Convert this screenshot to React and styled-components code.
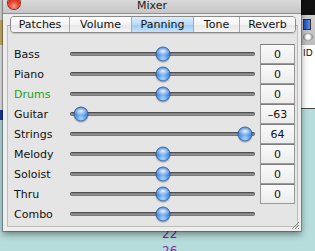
import styled, { createGlobalStyle } from "styled-components";

const GlobalStyle = createGlobalStyle`
  html, body {
    margin: 0;
    padding: 0;
    overflow: hidden;
  }
  body {
    font-family: "DejaVu Sans", "Liberation Sans", sans-serif;
  }
`;

const tabs = ["Patches", "Volume", "Panning", "Tone", "Reverb"];
const tabWidths = [58, 62, 62, 46, 56];

const channels = [
  { name: "Bass", value: 0 },
  { name: "Piano", value: 0 },
  { name: "Drums", value: 0, color: "#1e9e1e" },
  { name: "Guitar", value: -63 },
  { name: "Strings", value: 64 },
  { name: "Melody", value: 0 },
  { name: "Soloist", value: 0 },
  { name: "Thru", value: 0 },
  { name: "Combo", value: 0, noBox: true },
];

const Desktop = styled.div`
  position: relative;
  width: 315px;
  height: 251px;
  overflow: hidden;
  background-color: #b7dcdc;
`;

// other windows peeking out behind the mixer
const RightWindow = styled.div`
  position: absolute;
  left: 299px;
  top: 0;
  width: 20px;
  height: 108px;
  display: flex;
  flex-direction: column;
  border-bottom: 1px solid #4a4a4a;
`;

const RightTop = styled.div`
  height: 15px;
  background-color: #111;
`;

const RightTools = styled.div`
  height: 30px;
  background: linear-gradient(#d0d0d0, #bdbdbd);
  display: flex;
  flex-direction: column;
  align-items: flex-start;
  padding: 4px 0 0 4px;
  box-sizing: border-box;
  gap: 3px;
`;

const BlueBar = styled.div`
  width: 6px;
  height: 9px;
  background: linear-gradient(90deg, #1c4fb8, #5f8ee0);
  border: 1px solid #333;
`;

const Knob = styled.div`
  width: 10px;
  height: 8px;
  border-radius: 50%;
  background: radial-gradient(circle, #fff 30%, #888 70%);
`;

const RightBody = styled.div`
  flex: 1;
  background-color: #fff;
  font-size: 9px;
  padding: 3px 0 0 4px;
  color: #111;
`;

const LeftWindow = styled.div`
  position: absolute;
  left: 0;
  top: 0;
  width: 4px;
  height: 120px;
  display: flex;
  flex-direction: column;
`;

const LeftPart = styled.div`
  height: ${(p) => p.$h}px;
  background-color: ${(p) => p.$bg};
`;

const BackList = styled.div`
  position: absolute;
  left: 162px;
  top: 226px;
  display: flex;
  flex-direction: column;
  font-size: 12px;
  line-height: 17px;
  color: #8d1e9c;
`;

const Window = styled.div`
  position: absolute;
  left: 3px;
  top: -8px;
  width: 298px;
  height: 239px;
  background-color: #ededed;
  box-shadow: 0 0 0 1px rgba(0, 0, 0, 0.25), 0 3px 7px rgba(0, 0, 0, 0.45);
  display: flex;
  flex-direction: column;
  box-sizing: border-box;
`;

const TitleBar = styled.div`
  height: 22px;
  flex-shrink: 0;
  box-sizing: border-box;
  display: grid;
  grid-template-columns: 1fr auto 1fr;
  align-items: center;
  padding-top: 6px;
  background: linear-gradient(#e6e6e6, #d2d2d2 60%, #c6c6c6);
  border-bottom: 1px solid #8e8e8e;
  font-size: 11px;
  color: #1a1a1a;
`;

const CloseButton = styled.div`
  width: 12px;
  height: 12px;
  margin-left: 5px;
  margin-top: -6px;
  border-radius: 50%;
  background: radial-gradient(circle at 50% 75%, #ff9c8c 0, #e8402c 45%, #b01808 100%);
  box-shadow: 0 0 0 1px #8a2a1e;
`;

const Title = styled.div`
  margin-top: -1px;
`;

const Content = styled.div`
  flex: 1;
  display: flex;
  flex-direction: column;
  padding: 2px 3px 4px 4px;
`;

const TabStrip = styled.div`
  position: relative;
  z-index: 1;
  display: flex;
  align-self: center;
  margin-left: 1px;
  height: 17px;
  border: 1px solid #8a8a8a;
  border-radius: 4px;
  overflow: hidden;
  box-sizing: border-box;
  box-shadow: 0 1px 1px rgba(0, 0, 0, 0.15);
`;

const Tab = styled.div`
  display: flex;
  align-items: center;
  justify-content: center;
  box-sizing: border-box;
  font-size: 11px;
  color: #111;
  border-left: 1px solid ${(p) => (p.$first ? "transparent" : "#a8a8a8")};
  background: ${(p) =>
    p.$active
      ? "linear-gradient(#dcedfc, #b9daf8 50%, #9dc9f2 51%, #c6e2fb)"
      : "linear-gradient(#ffffff, #f3f3f3 50%, #e6e6e6 51%, #f4f4f4)"};
  ${(p) => p.$first && "border-left: none;"}
`;

const Panel = styled.div`
  margin-top: -8px;
  flex: 1;
  border: 1px solid #bdbdbd;
  border-top-color: #a8a8a8;
  background-color: #e5e5e5;
  padding: 18px 2px 1px 6px;
  display: flex;
  flex-direction: column;
`;

const Row = styled.div`
  display: grid;
  grid-template-columns: 56px 185px 40px;
  height: 20px;
  align-items: center;
`;

const Label = styled.div`
  font-size: 11px;
  color: ${(p) => p.$color || "#111"};
`;

const Track = styled.div`
  position: relative;
  height: 4px;
  border-radius: 2px;
  background: linear-gradient(#5c5c5c, #8c8c8c 50%, #a8a8a8);
  box-shadow: inset 0 0 0 1px rgba(0, 0, 0, 0.25);
`;

const Thumb = styled.div`
  position: absolute;
  top: 50%;
  width: 15px;
  height: 15px;
  border-radius: 50%;
  transform: translate(-50%, -50%);
  box-sizing: border-box;
  border: 1px solid #2f62a8;
  background:
    radial-gradient(ellipse 60% 35% at 50% 28%, rgba(255, 255, 255, 0.9), rgba(255, 255, 255, 0) 100%),
    radial-gradient(circle at 50% 85%, #a8d6ff 0, #4d93e6 45%, #2166c8 100%);
  box-shadow: 0 1px 1px rgba(0, 0, 0, 0.3);
`;

const ValueBox = styled.div`
  height: 20px;
  margin-left: 5px;
  box-sizing: border-box;
  border: 1px solid #9a9a9a;
  border-top-color: #7e7e7e;
  background: linear-gradient(#fafafa, #ececec);
  display: flex;
  align-items: center;
  justify-content: center;
  font-size: 11px;
  color: #111;
`;

const Grip = styled.svg`
  position: absolute;
  right: 2px;
  bottom: 2px;
`;

function thumbLeft(v) {
  return 10 + ((v + 64) / 128) * 165;
}

function formatValue(v) {
  return v < 0 ? `\u2013${Math.abs(v)}` : `${v}`;
}

export default function App() {
  return (
    <>
      <GlobalStyle />
      <Desktop>
        <LeftWindow>
          <LeftPart $h={20} $bg="#dcdcdc" />
          <LeftPart $h={25} $bg="#c9b36a" />
          <LeftPart $h={65} $bg="#e8e8e8" />
          <LeftPart $h={10} $bg="#1c3b9e" />
        </LeftWindow>
        <RightWindow>
          <RightTop />
          <RightTools>
            <BlueBar />
            <Knob />
          </RightTools>
          <RightBody>ID</RightBody>
        </RightWindow>
        <BackList>
          <span>22</span>
          <span>26</span>
        </BackList>

        <Window>
          <TitleBar>
            <CloseButton />
            <Title>Mixer</Title>
            <span />
          </TitleBar>
          <Content>
            <TabStrip>
              {tabs.map((t, i) => (
                <Tab
                  key={t}
                  $first={i === 0}
                  $active={t === "Panning"}
                  style={{ width: tabWidths[i] }}
                >
                  {t}
                </Tab>
              ))}
            </TabStrip>
            <Panel>
              {channels.map((c) => (
                <Row key={c.name}>
                  <Label $color={c.color}>{c.name}</Label>
                  <Track>
                    <Thumb style={{ left: thumbLeft(c.value) }} />
                  </Track>
                  {!c.noBox && <ValueBox>{formatValue(c.value)}</ValueBox>}
                </Row>
              ))}
            </Panel>
          </Content>
          <Grip width="8" height="8" viewBox="0 0 8 8">
            <path d="M1 8 L8 1 M4 8 L8 4 M7 8 L8 7" stroke="#8a8a8a" strokeWidth="1" />
          </Grip>
        </Window>
      </Desktop>
    </>
  );
}
